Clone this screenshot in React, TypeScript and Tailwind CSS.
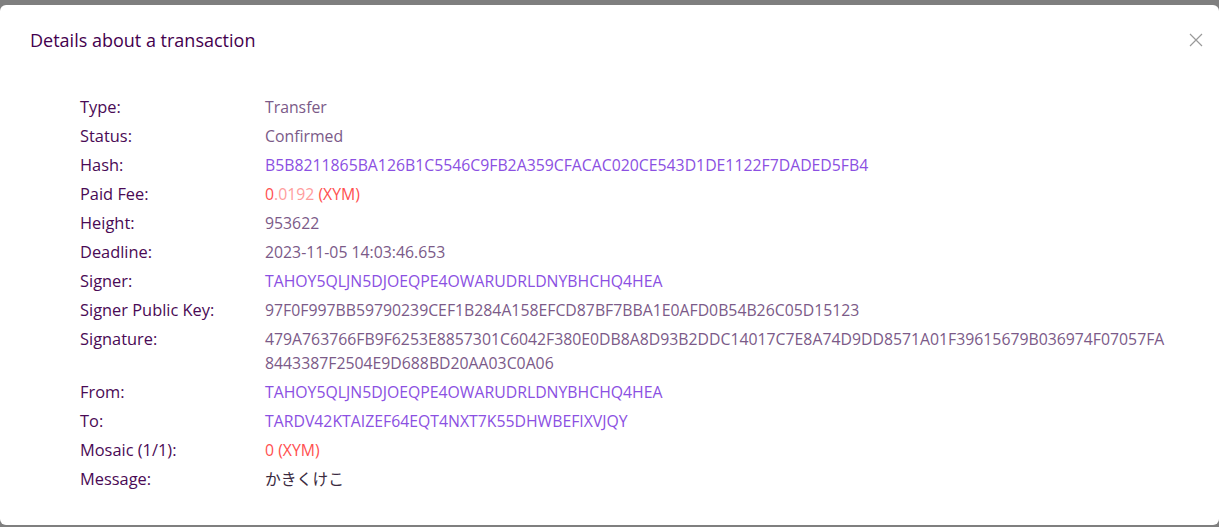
import React from "react"

type Row = {
  label: string
  value: React.ReactNode
  kind?: "text" | "link" | "dark"
}

const font = { fontFamily: '"Open Sans", "Noto Sans CJK JP", sans-serif' }

const rows: Row[] = [
  { label: "Type:", value: "Transfer" },
  { label: "Status:", value: "Confirmed" },
  { label: "Hash:", value: "B5B8211865BA126B1C5546C9FB2A359CFACAC020CE543D1DE1122F7DADED5FB4", kind: "link" },
  {
    label: "Paid Fee:",
    value: (
      <span className="text-[#ff5050]">
        0<span className="text-[#ff9d9d]">.0192</span> (XYM)
      </span>
    ),
  },
  { label: "Height:", value: "953622" },
  { label: "Deadline:", value: "2023-11-05 14:03:46.653" },
  { label: "Signer:", value: "TAHOY5QLJN5DJOEQPE4OWARUDRLDNYBHCHQ4HEA", kind: "link" },
  { label: "Signer Public Key:", value: "97F0F997BB59790239CEF1B284A158EFCD87BF7BBA1E0AFD0B54B26C05D15123" },
  {
    label: "Signature:",
    value:
      "479A763766FB9F6253E8857301C6042F380E0DB8A8D93B2DDC14017C7E8A74D9DD8571A01F39615679B036974F07057FA8443387F2504E9D688BD20AA03C0A06",
  },
  { label: "From:", value: "TAHOY5QLJN5DJOEQPE4OWARUDRLDNYBHCHQ4HEA", kind: "link" },
  { label: "To:", value: "TARDV42KTAIZEF64EQT4NXT7K55DHWBEFIXVJQY", kind: "link" },
  { label: "Mosaic (1/1):", value: <span className="text-[#ff5050]">0 (XYM)</span> },
  { label: "Message:", value: "かきくけこ", kind: "dark" },
]

const valueColor = (kind?: Row["kind"]) => {
  if (kind === "link") return "text-[#8b50e2]"
  if (kind === "dark") return "text-[#3a2a40]"
  return "text-[#7b5a88]"
}

export default function App() {
  return (
    <div className="h-[527px] w-full overflow-hidden bg-[#7f7f7f] pt-[5px]" style={font}>
      <div className="relative h-[520px] rounded-md bg-white">
        <div className="flex items-center justify-between pl-[30px] pr-[11px] pt-[21px]">
          <h2 className="text-[18px] leading-[28px] font-medium text-[#44004e]">
            Details about a transaction
          </h2>
          <button className="flex h-6 w-6 items-center justify-center text-[#9a9a9a]">
            <svg width="14" height="14" viewBox="0 0 14 14" fill="none" stroke="currentColor" strokeWidth="1.2">
              <path d="M1 1L13 13M13 1L1 13" />
            </svg>
          </button>
        </div>

        <div className="mt-[41px] flex flex-col gap-[5px] pl-[80px] leading-[24px]">
          {rows.map((r) => (
            <div key={r.label} className="grid grid-cols-[185px_908px]">
              <div className="text-[16.4px] text-[#4a0a55]">{r.label}</div>
              <div className={`break-all text-[15.8px] ${valueColor(r.kind)}`}>{r.value}</div>
            </div>
          ))}
        </div>
      </div>
    </div>
  )
}
